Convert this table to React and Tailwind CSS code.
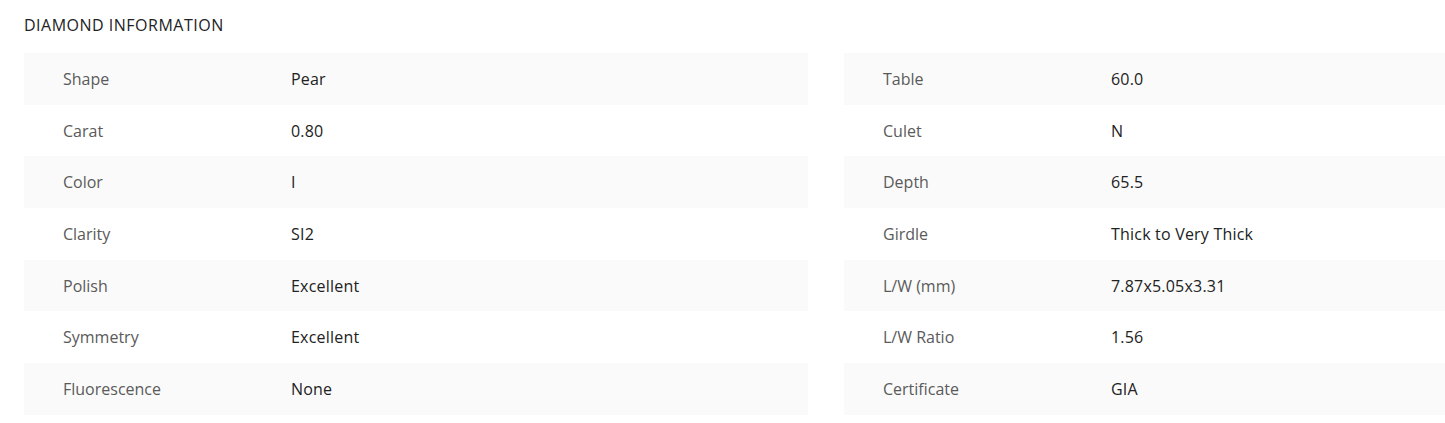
import React from 'react'

const leftRows = [
  ['Shape', 'Pear'],
  ['Carat', '0.80'],
  ['Color', 'I'],
  ['Clarity', 'SI2'],
  ['Polish', 'Excellent'],
  ['Symmetry', 'Excellent'],
  ['Fluorescence', 'None'],
]

const rightRows = [
  ['Table', '60.0'],
  ['Culet', 'N'],
  ['Depth', '65.5'],
  ['Girdle', 'Thick to Very Thick'],
  ['L/W (mm)', '7.87x5.05x3.31'],
  ['L/W Ratio', '1.56'],
  ['Certificate', 'GIA'],
]

const InfoTable = ({ rows }) => (
  <div className="w-[784px] shrink-0">
    {rows.map(([label, value], i) => (
      <div
        key={label}
        className={`flex items-center h-[51.7px] pl-[39px] ${i % 2 === 0 ? 'bg-[#fafafa]' : 'bg-white'}`}
      >
        <div className="w-[228px] text-[#5a5a5a]">{label}</div>
        <div className="text-[#222] tracking-[0.2px]">{value}</div>
      </div>
    ))}
  </div>
)

const App = () => {
  return (
    <div className="w-[1445px] h-[423px] overflow-hidden bg-white font-['Open_Sans',sans-serif] text-[16px] leading-[20px]">
      <div className="px-6 pt-[15px]">
        <h2 className="text-[#222] uppercase tracking-[0.5px] mb-[18px]">Diamond Information</h2>
        <div className="flex gap-9">
          <InfoTable rows={leftRows} />
          <InfoTable rows={rightRows} />
        </div>
      </div>
    </div>
  )
}

export default App
